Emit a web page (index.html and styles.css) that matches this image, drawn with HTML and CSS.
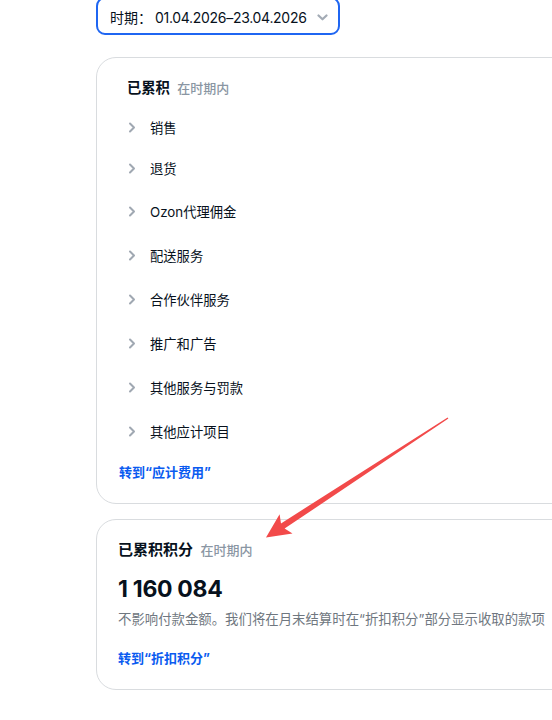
FILE: index.html
```html
<!DOCTYPE html>
<html lang="zh">
<head>
<meta charset="utf-8">
<link rel="stylesheet" href="styles.css">
</head>
<body>
<div class="page">
  <div class="period">
    <span class="period-label">时期：</span>
    <span class="period-value">01.04.2026–23.04.2026</span>
    <svg class="period-chev" width="11" height="7" viewBox="0 0 11 7"><path d="M1.5 1.5 L5.5 5.3 L9.5 1.5" fill="none" stroke="#a3abb5" stroke-width="2.2" stroke-linecap="round" stroke-linejoin="round"/></svg>
  </div>

  <section class="card card-accrued">
    <h2 class="card-title indent">已累积 <span class="muted">在时期内</span></h2>
    <ul class="rows">
      <li class="row"><svg class="chev" width="8" height="11" viewBox="0 0 8 11"><path d="M2 1.5 L6 5.5 L2 9.5" fill="none" stroke="#a0a8b2" stroke-width="2" stroke-linecap="round" stroke-linejoin="round"/></svg>销售</li>
      <li class="row"><svg class="chev" width="8" height="11" viewBox="0 0 8 11"><path d="M2 1.5 L6 5.5 L2 9.5" fill="none" stroke="#a0a8b2" stroke-width="2" stroke-linecap="round" stroke-linejoin="round"/></svg>退货</li>
      <li class="row"><svg class="chev" width="8" height="11" viewBox="0 0 8 11"><path d="M2 1.5 L6 5.5 L2 9.5" fill="none" stroke="#a0a8b2" stroke-width="2" stroke-linecap="round" stroke-linejoin="round"/></svg>Ozon代理佣金</li>
      <li class="row"><svg class="chev" width="8" height="11" viewBox="0 0 8 11"><path d="M2 1.5 L6 5.5 L2 9.5" fill="none" stroke="#a0a8b2" stroke-width="2" stroke-linecap="round" stroke-linejoin="round"/></svg>配送服务</li>
      <li class="row"><svg class="chev" width="8" height="11" viewBox="0 0 8 11"><path d="M2 1.5 L6 5.5 L2 9.5" fill="none" stroke="#a0a8b2" stroke-width="2" stroke-linecap="round" stroke-linejoin="round"/></svg>合作伙伴服务</li>
      <li class="row"><svg class="chev" width="8" height="11" viewBox="0 0 8 11"><path d="M2 1.5 L6 5.5 L2 9.5" fill="none" stroke="#a0a8b2" stroke-width="2" stroke-linecap="round" stroke-linejoin="round"/></svg>推广和广告</li>
      <li class="row"><svg class="chev" width="8" height="11" viewBox="0 0 8 11"><path d="M2 1.5 L6 5.5 L2 9.5" fill="none" stroke="#a0a8b2" stroke-width="2" stroke-linecap="round" stroke-linejoin="round"/></svg>其他服务与罚款</li>
      <li class="row"><svg class="chev" width="8" height="11" viewBox="0 0 8 11"><path d="M2 1.5 L6 5.5 L2 9.5" fill="none" stroke="#a0a8b2" stroke-width="2" stroke-linecap="round" stroke-linejoin="round"/></svg>其他应计项目</li>
    </ul>
    <a class="link link-accrued" href="#">转到“应计费用”</a>
  </section>

  <section class="card card-points">
    <h2 class="card-title title-lg">已累积积分 <span class="muted">在时期内</span></h2>
    <div class="amount">1 160 084</div>
    <p class="desc">不影响付款金额。我们将在月末结算时在“折扣积分”部分显示收取的款项</p>
    <a class="link link-points" href="#">转到“折扣积分”</a>
  </section>
</div>

<svg class="arrow" width="552" height="720" viewBox="0 0 552 720">
  <polygon points="448.4,418.5 284.6,528.6 292.5,533.5 266,537.5 279.6,514.2 281,523.4 447.6,417.5" fill="#f24a4a"/>
</svg>
</body>
</html>
```

FILE: styles.css
```css
* { box-sizing: border-box; }
html, body { margin: 0; padding: 0; }
body {
  width: 552px;
  height: 720px;
  overflow: hidden;
  background: #ffffff;
  font-family: "Inter", "Noto Sans CJK SC", sans-serif;
  color: #07111c;
  position: relative;
}
.page {
  padding-left: 96px;
}
.period {
  width: 244px;
  height: 38px;
  margin-top: -3px;
  border: 2px solid #1f66f2;
  border-radius: 9px;
  display: flex;
  align-items: center;
  padding: 2px 0 0 12px;
  font-size: 14px;
}
.period-label { margin-right: 3px; }
.period-value { letter-spacing: -0.3px; }
.period-chev { margin-left: 10px; margin-top: 1px; }

.card {
  width: 480px;
  border: 1px solid #d9dcdf;
  border-radius: 20px;
}
.card-accrued {
  margin-top: 22px;
  padding: 20px 22px 21px;
}
.card-points {
  margin-top: 15px;
  padding: 19px 21px 21px;
}
.card-title {
  margin: 0;
  font-size: 14.3px;
  font-weight: 700;
  line-height: 20px;
}
.card-title.indent { padding-left: 8px; }
.title-lg { font-size: 15px; line-height: 22px; }
.muted {
  font-size: 13px;
  font-weight: 500;
  color: #8a96a3;
  margin-left: 4px;
}
.rows {
  list-style: none;
  margin: 9px 0 0;
  padding: 0 0 0 9px;
}
.row {
  height: 44px;
  display: flex;
  align-items: center;
  font-size: 13.3px;
}
.row:first-child { height: 40px; }
.row:nth-child(2) { height: 42px; }
.chev { margin-right: 14px; flex: none; }
.link {
  display: block;
  color: #0a5bf0;
  font-size: 13px;
  font-weight: 700;
  line-height: 20px;
  text-decoration: none;
}
.link-accrued { margin-top: 9px; }
.amount {
  margin-top: 13px;
  font-size: 23px;
  font-weight: 700;
  line-height: 30px;
  letter-spacing: -0.3px;
}
.desc {
  margin: 5px 0 0;
  font-size: 13.4px;
  line-height: 20px;
  color: #6f7780;
  white-space: nowrap;
}
.link-points { margin-top: 19px; }
.arrow {
  position: absolute;
  left: 0;
  top: 0;
  pointer-events: none;
}
```
